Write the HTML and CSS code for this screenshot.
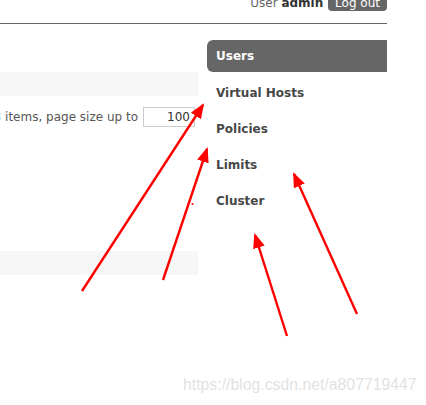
FILE: index.html
```html
<!DOCTYPE html>
<html>
<head>
<meta charset="utf-8">
<link rel="stylesheet" href="styles.css">
</head>
<body>
<div class="page">
  <header class="topbar">
    <div class="login">User <b>admin</b> <span class="logout">Log out</span></div>
  </header>
  <div class="main">
    <div class="content">
      <div class="band"></div>
      <div class="pager">
        <span class="count">3</span><span class="label">&nbsp;items, page size up to</span><span class="size">100</span>
      </div>
      <div class="spacer"></div>
      <div class="band"></div>
    </div>
    <ul class="nav">
      <li class="active">Users</li>
      <li>Virtual Hosts</li>
      <li>Policies</li>
      <li>Limits</li>
      <li>Cluster</li>
    </ul>
  </div>
</div>
<svg class="arrows" width="426" height="405" viewBox="0 0 426 405">
  <defs>
    <marker id="head" viewBox="0 0 15 12" refX="13" refY="6" markerWidth="15" markerHeight="12" markerUnits="userSpaceOnUse" orient="auto">
      <path d="M0,0 L15,6 L0,12 z" fill="#ff0000"/>
    </marker>
  </defs>
  <g stroke="#ff0000" stroke-width="2.4" fill="none">
    <line x1="82" y1="291" x2="203" y2="105" marker-end="url(#head)"/>
    <line x1="163" y1="280" x2="207" y2="149" marker-end="url(#head)"/>
    <line x1="357" y1="314" x2="294" y2="174" marker-end="url(#head)"/>
    <line x1="287" y1="336" x2="255" y2="235" marker-end="url(#head)"/>
  </g>
  <circle cx="192.5" cy="204" r="1" fill="#ff0000"/>
</svg>
<div class="watermark">https://blog.csdn.net/a807719447</div>
</body>
</html>
```

FILE: styles.css
```css
html, body {
  margin: 0;
  padding: 0;
  background: #fff;
}
body {
  width: 426px;
  height: 405px;
  overflow: hidden;
  position: relative;
  font-family: "DejaVu Sans", Verdana, sans-serif;
  font-size: 12px;
  color: #484848;
}
.page {
  width: 387px;
}
.topbar {
  display: flex;
  justify-content: flex-end;
  height: 23px;
  border-bottom: 1px solid #666;
}
.login {
  margin-top: -5px;
  line-height: 16px;
  color: #666;
  white-space: nowrap;
}
.login b {
  color: #333;
}
.logout {
  display: inline-block;
  background: #666;
  color: #fff;
  padding: 0 7px;
  border-radius: 0 0 4px 4px;
  margin-left: 1px;
}
.main {
  display: flex;
  gap: 9px;
}
.content {
  width: 198px;
  overflow: hidden;
  padding-top: 48px;
  flex: none;
}
.band {
  height: 24px;
  background: #f7f7f7;
}
.pager {
  display: flex;
  justify-content: flex-end;
  align-items: center;
  white-space: nowrap;
  margin-top: 11px;
  padding-right: 3px;
  height: 20px;
  color: #555;
}
.pager > span {
  flex: none;
}
.count {
  color: #3a6ea5;
}
.label {
  margin-right: 5px;
}
.size {
  display: inline-block;
  box-sizing: border-box;
  width: 52px;
  height: 20px;
  line-height: 18px;
  border: 1px solid #ccc;
  text-align: right;
  padding-right: 4px;
  color: #333;
}
.spacer {
  height: 124px;
}
.nav {
  list-style: none;
  margin: 16px 0 0;
  padding: 0;
  width: 180px;
  display: flex;
  flex-direction: column;
  gap: 4px;
}
.nav li {
  height: 32px;
  line-height: 34px;
  padding-left: 9px;
  font-weight: bold;
  color: #484848;
}
.nav li.active {
  background: #666;
  color: #fff;
  border-radius: 6px 0 0 6px;
  line-height: 32px;
}
.arrows {
  position: absolute;
  left: 0;
  top: 0;
}
.watermark {
  position: absolute;
  left: 183px;
  top: 375px;
  font-family: "Liberation Sans", Arial, sans-serif;
  font-size: 15.8px;
  line-height: 20px;
  color: rgba(200, 200, 200, 0.55);
  white-space: nowrap;
}
```
